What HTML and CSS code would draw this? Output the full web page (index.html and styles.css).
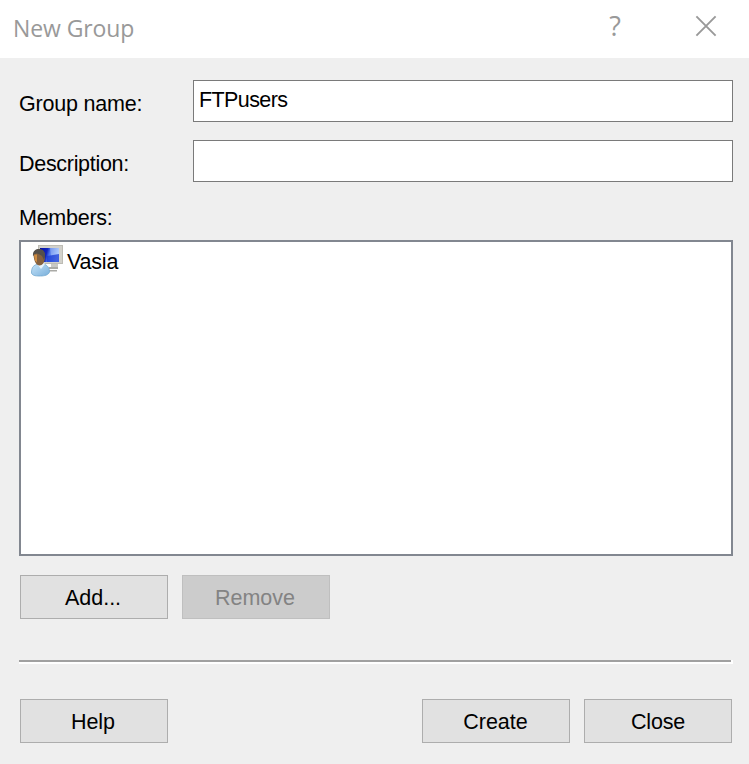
FILE: index.html
```html
<!DOCTYPE html>
<html lang="en">
<head>
<meta charset="utf-8">
<title>New Group</title>
<link rel="stylesheet" href="styles.css">
</head>
<body>
<main class="dialog">
  <header class="titlebar">
    <h1 class="title">New Group</h1>
    <span class="help-mark">?</span>
    <svg class="close-mark" width="22" height="22" viewBox="0 0 22 22"><path d="M1.4 1.4 20.6 20.6M20.6 1.4 1.4 20.6" fill="none" stroke="#999" stroke-width="1.9"/></svg>
  </header>
  <div class="content">
    <div class="field">
      <label class="label">Group name:</label>
      <div class="input">FTPusers</div>
    </div>
    <div class="field">
      <label class="label description">Description:</label>
      <div class="input"></div>
    </div>
    <div class="members-label">Members:</div>
    <div class="list">
      <div class="member">
        <svg class="user-icon" width="34" height="34" viewBox="0 0 34 34">
          <defs>
            <linearGradient id="screen" x1="0" y1="0" x2="1" y2=".2">
              <stop offset="0" stop-color="#0710a0"/><stop offset=".4" stop-color="#1025c0"/><stop offset=".55" stop-color="#4c74e8"/><stop offset="1" stop-color="#a4c4fa"/>
            </linearGradient>
            <linearGradient id="shirt" x1="0" y1="0" x2="1" y2="1">
              <stop offset="0" stop-color="#c5e3f8"/><stop offset="1" stop-color="#79afdb"/>
            </linearGradient>
          </defs>
          <path d="M21 20h7v3h-7z" fill="#c8c8c5"/>
          <path d="M19 23h9v2h-9zM18 26h9v1.500h-9z" fill="#aaaaa6"/>
          <path d="M8 1h25v19H8z" fill="#bdbcb5"/>
          <path d="M9 2h23v17H9z" fill="#d2d1cb"/>
          <path d="M10 4h19v14H10z" fill="url(#screen)"/>
          <path d="M20 4h9v6l-8 2z" fill="#bcd4ff" opacity=".38"/>
          <path d="M17 12l12-2v8H17z" fill="#1538d4" opacity=".7"/>
          <path d="M1.500 29c0-6 2-8 7-9h5c4 1 6 4 6 8-1 3-5 4-9 4s-8 0-9-3z" fill="url(#shirt)" stroke="#73a9d1" stroke-width=".8"/>
          <path d="M7 20l4 5 4-5-2-2H8z" fill="#e9f5fd"/>
          <path d="M3.500 11c0-4 2.500-5.500 5.500-5.500 4 0 6.500 3 6 8-.3 5-2.500 8-5.500 8s-5.500-4-6-10.500z" fill="#85613f"/>
          <path d="M3 12C2.500 7 5.500 5 9 5c4.500 0 6.500 3 6 8l-1 3-2-4C9 10 7 9 5.500 10z" fill="#54504b"/>
          <path d="M4 10.500h3v8l-2-2z" fill="#cf8d43"/>
        </svg>
        <span class="member-name">Vasia</span>
      </div>
    </div>
    <div class="actions">
      <button class="button">Add...</button>
      <button class="button" disabled>Remove</button>
    </div>
    <div class="separator"></div>
    <footer class="footer">
      <button class="button help">Help</button>
      <button class="button create">Create</button>
      <button class="button close">Close</button>
    </footer>
  </div>
</main>
</body>
</html>
```
FILE: styles.css
```css
* { box-sizing: border-box; }
body { margin: 0; background: #efefef; }
.dialog {
  width: 749px;
  height: 764px;
  overflow: hidden;
  background: #efefef;
  color: #000;
  font: 21.5px/26px "Liberation Sans", Arial, sans-serif;
}
.titlebar {
  display: flex;
  align-items: flex-start;
  height: 58px;
  padding: 0 32px 0 13px;
  background: #fff;
  color: #999;
  font-family: "Open Sans", "Noto Sans", sans-serif;
}
.title { margin: 0 auto 0 0; padding-top: 12px; font-size: 23px; line-height: 32px; font-weight: 400; letter-spacing: -.1px; }
.help-mark { margin: 10px 74px 0 0; font-size: 27px; line-height: 32px; }
.close-mark { margin-top: 15px; }
.content { padding: 22px 16px 0 19px; }
.field { display: flex; height: 42px; margin-bottom: 18px; }
.label { width: 174px; padding-top: 11px; letter-spacing: -.2px; }
.description { letter-spacing: -.3px; }
.input {
  flex: 1;
  padding: 6px 5px;
  border: 1px solid #7a7a7a;
  background: #fff;
  letter-spacing: -.6px;
}
.members-label { height: 40px; padding-top: 5px; letter-spacing: -.25px; }
.list { height: 316px; border: 2px solid #828790; background: #fff; }
.member { display: flex; align-items: center; gap: 3px; height: 37px; padding-left: 9px; }
.member-name { padding-top: 3px; letter-spacing: -.2px; }
.actions { display: flex; gap: 14px; padding: 19px 0 0 1px; }
.button {
  width: 148px;
  height: 44px;
  padding: 2px 2px 0 0;
  border: 1px solid #adadad;
  background: #e1e1e1;
  color: #000;
  font: inherit;
}
.button:disabled { border-color: #bfbfbf; background: #ccc; color: #838383; }
.separator {
  height: 4px;
  margin-top: 41px;
  background: linear-gradient(#a0a0a0, #a0a0a0) 0 0 / 712px 2px no-repeat, #fff;
}
.footer { display: flex; gap: 14px; padding: 35px 1px 0; }
.help { margin-right: auto; letter-spacing: -.1px; }
.create { padding-right: 1px; }
.close { padding-right: 0; letter-spacing: -.2px; }
```
